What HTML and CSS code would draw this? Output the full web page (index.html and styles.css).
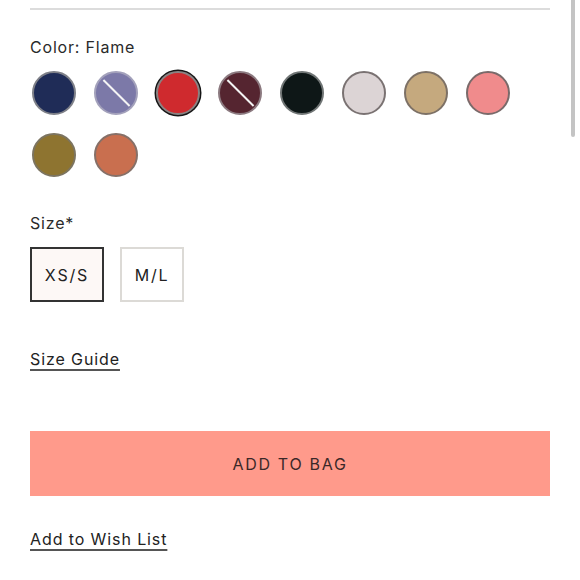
FILE: index.html
```html
<!DOCTYPE html>
<html lang="en">
<head>
<meta charset="utf-8">
<title>Product options</title>
<link rel="stylesheet" href="styles.css">
</head>
<body>
<div class="scroll-thumb"></div>
<main class="product-form">
  <hr class="divider">
  <section class="option">
    <div class="option-label">Color: Flame</div>
    <div class="swatches">
      <span class="swatch"><span class="dot c-navy"></span></span>
      <span class="swatch"><span class="dot c-lavender unavailable"></span></span>
      <span class="swatch"><span class="dot c-flame selected"></span></span>
      <span class="swatch"><span class="dot c-maroon unavailable"></span></span>
      <span class="swatch"><span class="dot c-black"></span></span>
      <span class="swatch"><span class="dot c-fog"></span></span>
      <span class="swatch"><span class="dot c-tan"></span></span>
      <span class="swatch"><span class="dot c-pink"></span></span>
      <span class="swatch"><span class="dot c-olive"></span></span>
      <span class="swatch"><span class="dot c-copper"></span></span>
    </div>
  </section>
  <section class="option size-option">
    <div class="option-label">Size*</div>
    <div class="sizes">
      <button class="size active">XS/S</button>
      <button class="size">M/L</button>
    </div>
  </section>
  <a class="text-link size-guide" href="#">Size Guide</a>
  <button class="add-to-bag">ADD TO BAG</button>
  <a class="text-link wish" href="#">Add to Wish List</a>
</main>
</body>
</html>
```

FILE: styles.css
```css
* { box-sizing: border-box; }
html, body { margin: 0; padding: 0; background: #fff; }
body {
  font-family: "Inter", "Open Sans", "Liberation Sans", sans-serif;
  color: #222;
  width: 580px;
  height: 580px;
  overflow: hidden;
}
.scroll-thumb {
  position: absolute;
  top: 0;
  left: 571px;
  width: 4px;
  height: 137px;
  border-radius: 0 0 2px 2px;
  background: #c4c4c4;
}
.product-form {
  padding: 8px 30px 0 30px;
  display: flex;
  flex-direction: column;
  align-items: flex-start;
}
.divider {
  width: 520px;
  height: 2px;
  border: 0;
  margin: 0;
  background: #dcdcdc;
}
.option-label {
  font-size: 16px;
  line-height: 20px;
  letter-spacing: 0.8px;
  color: #2a2a2a;
}
.option { display: flex; flex-direction: column; }
.option:first-of-type { margin-top: 27px; }
.swatches {
  margin-top: 12px;
  width: 520px;
  display: flex;
  flex-wrap: wrap;
  gap: 14px;
}
.swatch {
  width: 48px;
  height: 48px;
  display: flex;
  align-items: center;
  justify-content: center;
}
.dot {
  position: relative;
  width: 44px;
  height: 44px;
  border-radius: 50%;
  border: 2px solid #8a8282;
  overflow: hidden;
}
.dot.selected {
  box-shadow: 0 0 0 1.5px #151515;
  border-color: #8a8282;
}
.dot.unavailable::after {
  content: "";
  position: absolute;
  left: 50%;
  top: 50%;
  width: 37px;
  height: 2px;
  margin-left: -18.5px;
  margin-top: -1px;
  background: #f4f4f4;
  transform: rotate(45deg);
}
.c-navy { background: #1f2c57; border-color: #7e8088; }
.c-lavender { background: #7c79a8; border-color: #a3a1bb; }
.c-flame { background: #cf2a2e; }
.c-maroon { background: #552530; border-color: #8c7a80; }
.c-black { background: #0e1717; border-color: #707575; }
.c-fog { background: #dcd4d5; border-color: #7a7272; }
.c-tan { background: #c5a97e; border-color: #7d7166; }
.c-pink { background: #f08b8c; border-color: #7a6a6a; }
.c-olive { background: #8e7430; border-color: #7c7460; }
.c-copper { background: #c96f4f; border-color: #867068; }

.size-option { margin-top: 34px; }
.sizes {
  margin-top: 14px;
  display: flex;
  gap: 16px;
}
.size {
  height: 55px;
  font-family: inherit;
  font-size: 16px;
  letter-spacing: 1.8px;
  color: #222;
  background: #fff;
  border: 2px solid #dcdad6;
  padding: 0;
  cursor: pointer;
}
.size:first-child { width: 74px; }
.size:nth-child(2) { width: 64px; }
.size.active {
  background: #fdf8f6;
  border-color: #333;
}
.text-link {
  font-size: 16px;
  line-height: 20px;
  letter-spacing: 0.9px;
  color: #222;
  text-decoration: underline;
  text-decoration-thickness: 1.5px;
  text-underline-offset: 4px;
  text-decoration-color: #555;
}
.size-guide { margin-top: 47px; }
.add-to-bag {
  margin-top: 62px;
  width: 520px;
  height: 65px;
  border: 0;
  background: #ff9a8b;
  font-family: inherit;
  font-size: 16px;
  letter-spacing: 1.7px;
  color: #3a2828;
  padding: 0;
}
.wish { margin-top: 33px; }
```
